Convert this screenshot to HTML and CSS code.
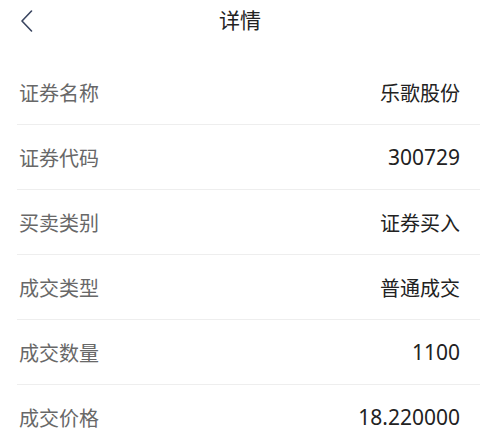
FILE: index.html
```html
<!DOCTYPE html>
<html lang="zh-CN">
<head>
  <meta charset="UTF-8">
  <meta name="viewport" content="width=device-width, initial-scale=1.0">
  <title>详情</title>
  <link rel="stylesheet" href="styles.css">
</head>
<body>

  <div class="header">
    <svg class="back" width="12" height="22" viewBox="0 0 12 22">
      <path d="M10.5 1 L1 11 L10.5 21" fill="none" stroke="#3a4560" stroke-width="1.6" stroke-linecap="round" stroke-linejoin="round"/>
    </svg>
    <div class="title">详情</div>
  </div>

  <div class="list">
    <div class="row"><span class="label">证券名称</span><span class="value">乐歌股份</span></div>
    <div class="row"><span class="label">证券代码</span><span class="value num">300729</span></div>
    <div class="row"><span class="label">买卖类别</span><span class="value">证券买入</span></div>
    <div class="row"><span class="label">成交类型</span><span class="value">普通成交</span></div>
    <div class="row"><span class="label">成交数量</span><span class="value num">1100</span></div>
    <div class="row"><span class="label">成交价格</span><span class="value num">18.220000</span></div>
  </div>

</body>
</html>
```

FILE: styles.css
```css
body {
  margin: 0;
  padding: 0;
  background: #ffffff;
  font-family: "Noto Sans", "Noto Sans CJK SC", sans-serif;
  overflow: hidden;
}

.header {
  position: relative;
  height: 40px;
  display: flex;
  align-items: center;
  justify-content: center;
}

.back {
  position: absolute;
  left: 21px;
  top: 10px;
}

.title {
  font-size: 21px;
  color: #222222;
  margin-top: -3px;
}

.list {
  padding-top: 20px;
  margin-left: 17px;
}

.row {
  height: 64px;
  display: flex;
  align-items: center;
  justify-content: space-between;
  padding: 0 20px 0 2px;
  border-bottom: 1px solid #eeeeee;
}

.row:last-child {
  border-bottom: none;
}

.label {
  font-size: 20px;
  color: #686868;
}

.value {
  font-size: 20px;
  color: #222222;
}

.value.num {
  font-size: 21px;
}
```
